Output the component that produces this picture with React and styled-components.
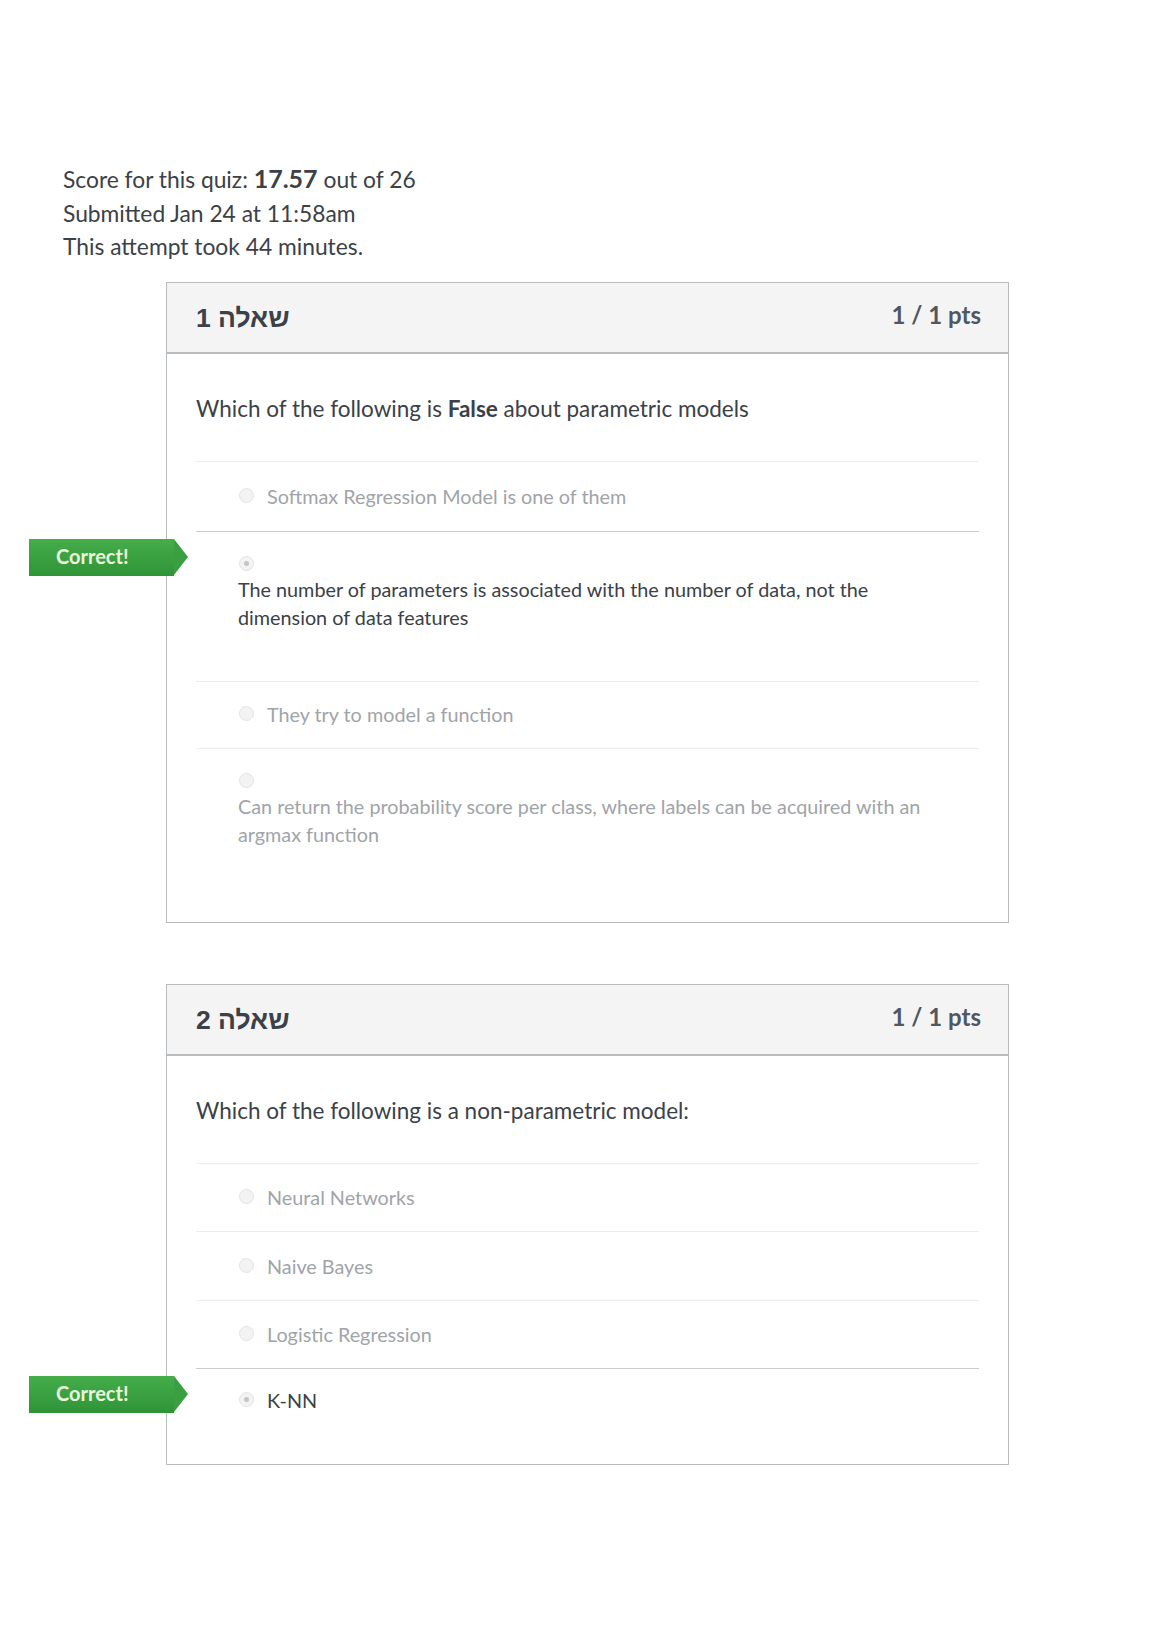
import React from 'react';
import styled, { createGlobalStyle } from 'styled-components';

const GlobalStyle = createGlobalStyle`
  body {
    margin: 0;
    background: #ffffff;
    font-family: 'Lato', 'Liberation Sans', sans-serif;
    color: #3b4147;
  }
`;

const Page = styled.div`
  width: 1157px;
  min-height: 1637px;
  padding-top: 162px;
  box-sizing: border-box;
`;

const Summary = styled.div`
  padding-left: 63px;
  font-size: 22.8px;
  line-height: 33.5px;
  color: #3b4147;
`;

const ScoreValue = styled.strong`
  font-size: 25px;
  font-weight: 700;
`;

const Questions = styled.div`
  margin-top: 18px;
  margin-left: 166px;
  width: 843px;
  display: flex;
  flex-direction: column;
  gap: 61px;
`;

const Card = styled.section`
  border: 1px solid #b9bcbf;
  background: #fff;
`;

const CardHeader = styled.header`
  height: 69px;
  background: #f4f4f4;
  border-bottom: 2px solid #b9bcbf;
  display: flex;
  align-items: flex-start;
  justify-content: space-between;
  padding: 0 27px 0 29px;
`;

const Title = styled.h2`
  margin: 20px 0 0;
  font-family: 'Liberation Sans', 'Lato', sans-serif;
  font-size: 26.5px;
  font-weight: 700;
  color: #3b4147;
`;

const Points = styled.div`
  margin-top: 17px;
  font-size: 24px;
  font-weight: 700;
  color: #4f5860;
`;

const CardBody = styled.div`
  padding: 0 29px;
  padding-bottom: ${({ $bottom }) => $bottom}px;
`;

const QuestionText = styled.p`
  margin: 0;
  padding: 40px 0 37px;
  font-size: 22.5px;
  line-height: 30px;
  color: #3b4147;
`;

const AnswerList = styled.div`
  display: flex;
  flex-direction: column;
`;

const Answer = styled.div`
  position: relative;
  border-top: 1px solid ${({ $strong }) => ($strong ? '#c9ccce' : '#ebeced')};
  padding: ${({ $pad }) => $pad};
  padding-left: 50px;
  display: flex;
  flex-direction: ${({ $stacked }) => ($stacked ? 'column' : 'row')};
  align-items: ${({ $stacked }) => ($stacked ? 'flex-start' : 'center')};
  gap: ${({ $stacked }) => ($stacked ? '4px' : '13px')};
`;

const Radio = styled.span`
  flex: none;
  width: 13px;
  height: 13px;
  border-radius: 50%;
  border: 1px solid #e3e3e3;
  background: #f3f3f3;
  display: flex;
  align-items: center;
  justify-content: center;
  margin-left: -7px;

  &::after {
    content: '';
    width: 5px;
    height: 5px;
    border-radius: 50%;
    background: ${({ $checked }) => ($checked ? '#c4c4c4' : 'transparent')};
  }
`;

const AnswerText = styled.span`
  font-size: 19.8px;
  line-height: 28px;
  color: ${({ $selected }) => ($selected ? '#3b4147' : '#a0a4a8')};
  margin-left: ${({ $stacked }) => ($stacked ? '-8px' : '0')};
  max-width: 690px;
`;

const CorrectFlag = styled.div`
  position: absolute;
  left: -167px;
  top: ${({ $top }) => $top}px;
  width: 145px;
  height: 37px;
  background: linear-gradient(#45ad4a, #2f9438);
  color: #e9f8dc;
  font-size: 20px;
  font-weight: 700;
  line-height: 35px;
  padding-left: 27px;
  box-sizing: border-box;

  &::after {
    content: '';
    position: absolute;
    right: -14px;
    top: 0;
    border-top: 18.5px solid transparent;
    border-bottom: 18.5px solid transparent;
    border-left: 14px solid #3a9f40;
  }
`;

const questions = [
  {
    title: 'שאלה 1',
    text: (
      <>
        Which of the following is <b>False</b> about parametric models
      </>
    ),
    bottom: 74,
    answers: [
      { label: 'Softmax Regression Model is one of them', pad: '20px 0 21px' },
      {
        label:
          'The number of parameters is associated with the number of data, not the dimension of data features',
        stacked: true,
        correct: true,
        pad: '24px 0 50px',
        flag: 7,
      },
      { label: 'They try to model a function', pad: '18px 0 20px' },
      {
        label:
          'Can return the probability score per class, where labels can be acquired with an argmax function',
        stacked: true,
        pad: '24px 0 0',
      },
    ],
  },
  {
    title: 'שאלה 2',
    text: 'Which of the following is a non-parametric model:',
    bottom: 0,
    answers: [
      { label: 'Neural Networks', pad: '19px 0 20px' },
      { label: 'Naive Bayes', pad: '20px 0 20px' },
      { label: 'Logistic Regression', pad: '19px 0 20px' },
      { label: 'K-NN', correct: true, pad: '17px 0 50px', flag: 7 },
    ],
  },
];

export default function App() {
  return (
    <Page>
      <GlobalStyle />
      <Summary>
        <div>
          Score for this quiz: <ScoreValue>17.57</ScoreValue> out of 26
        </div>
        <div>Submitted Jan 24 at 11:58am</div>
        <div>This attempt took 44 minutes.</div>
      </Summary>
      <Questions>
        {questions.map((q) => (
          <Card key={q.title}>
            <CardHeader>
              <Title>{q.title}</Title>
              <Points>1 / 1 pts</Points>
            </CardHeader>
            <CardBody $bottom={q.bottom}>
              <QuestionText>{q.text}</QuestionText>
              <AnswerList>
                {q.answers.map((a) => (
                  <Answer
                    key={a.label}
                    $stacked={a.stacked}
                    $strong={a.correct}
                    $pad={a.pad}
                  >
                    {a.correct && <CorrectFlag $top={a.flag}>Correct!</CorrectFlag>}
                    <Radio $checked={a.correct} />
                    <AnswerText $selected={a.correct} $stacked={a.stacked}>
                      {a.label}
                    </AnswerText>
                  </Answer>
                ))}
              </AnswerList>
            </CardBody>
          </Card>
        ))}
      </Questions>
    </Page>
  );
}
